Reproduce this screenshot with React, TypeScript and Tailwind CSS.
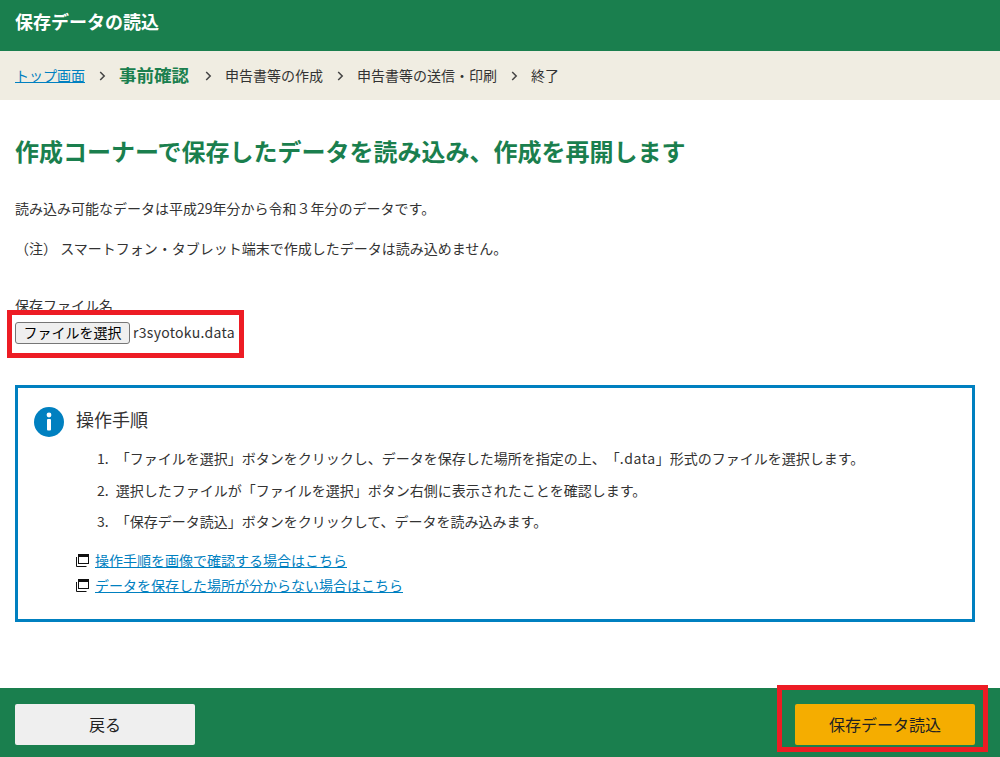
import { Fragment, type ReactNode } from "react"

const font = { fontFamily: '"Noto Sans CJK JP", sans-serif' }

const steps: ReactNode[] = [
  <>
    「ファイルを選択」ボタンをクリックし、データを保存した場所を指定の上、「<span className="tracking-[0.6px]">.data</span>」形式のファイルを選択します。
  </>,
  "選択したファイルが「ファイルを選択」ボタン右側に表示されたことを確認します。",
  "「保存データ読込」ボタンをクリックして、データを読み込みます。",
]

const links = ["操作手順を画像で確認する場合はこちら", "データを保存した場所が分からない場合はこちら"]

const crumbs = ["申告書等の作成", "申告書等の送信・印刷", "終了"]

function Chevron() {
  return (
    <svg width="7" height="10" viewBox="0 0 7 10" className="mx-[13.5px] shrink-0">
      <path d="M1.2 1 L5.2 5 L1.2 9" fill="none" stroke="#444" strokeWidth="1.5" />
    </svg>
  )
}

function WindowIcon() {
  return (
    <svg width="13" height="13" viewBox="0 0 13 13" className="shrink-0">
      <rect x="2.5" y="0.5" width="10" height="9" fill="#fff" stroke="#111" />
      <rect x="2.5" y="0.5" width="10" height="2.5" fill="#111" />
      <path d="M0.5 3 V12.5 H10.5" fill="none" stroke="#111" />
    </svg>
  )
}

export default function App() {
  return (
    <div style={font} className="relative flex h-[757px] w-[1000px] flex-col overflow-hidden bg-white text-[#333] [text-spacing-trim:space-all]">
      {/* Header */}
      <header className="flex h-[51px] items-center bg-[#1a7f4e] px-[15px] pb-[9px]">
        <h2 className="text-[18px] font-bold text-white">保存データの読込</h2>
      </header>

      {/* Steps */}
      <nav className="flex h-[49px] items-center bg-[#f0ede2] px-[15px] text-[14px]">
        <a className="text-[#0080c0] underline">トップ画面</a>
        <Chevron />
        <span className="mr-[2px] text-[17.5px] font-bold text-[#1a7f4e]">事前確認</span>
        <Chevron />
        {crumbs.map((c, i) => (
          <Fragment key={c}>
            {i > 0 && <Chevron />}
            <span>{c}</span>
          </Fragment>
        ))}
      </nav>

      <main className="flex-1 px-[15px]">
        <h1 className="mt-[33px] text-[24px] leading-[36px] font-bold text-[#1a7f4e]">
          作成コーナーで保存したデータを読み込み、作成を再開します
        </h1>
        <p className="mt-[28px] text-[14px] leading-[22px]">読み込み可能なデータは平成29年分から令和３年分のデータです。</p>
        <p className="mt-[18px] text-[14px] leading-[22px]">（注） スマートフォン・タブレット端末で作成したデータは読み込めません。</p>

        <p className="mt-[35px] text-[14px] leading-[22px]">保存ファイル名</p>
        <div className="mt-[6px] flex items-center text-[14px]">
          <button className="h-[22px] w-[115px] rounded-[3px] border border-[#767676] bg-[#efefef] pb-[2px] text-[14px] leading-none text-black">
            ファイルを選択
          </button>
          <span className="ml-[3px] pb-[1px] tracking-[0.3px]">r3syotoku.data</span>
        </div>

        {/* Operating steps */}
        <section className="mt-[41px] h-[237px] w-[960px] border-[3px] border-[#0080c0] pt-[18px] pl-[16px]">
          <div className="flex items-center gap-[12px]">
            <svg width="30" height="30" viewBox="0 0 30 30" className="shrink-0">
              <circle cx="15" cy="15" r="15" fill="#0080c0" />
              <circle cx="15" cy="8" r="2.4" fill="#fff" />
              <rect x="13" y="12" width="4" height="11.5" rx="1" fill="#fff" />
            </svg>
            <span className="pb-[4px] text-[18px]">操作手順</span>
          </div>
          <ol className="mt-[10px] ml-[63px] text-[14px] leading-[22px]">
            {steps.map((s, i) => (
              <li key={i} className="mb-[9.5px] flex gap-[7px]">
                <span>{i + 1}.</span>
                <span>{s}</span>
              </li>
            ))}
          </ol>
          <ul className="mt-[16px] ml-[42px] text-[14px]">
            {links.map((l) => (
              <li key={l} className="flex h-[25px] items-center gap-[6px]">
                <WindowIcon />
                <a className="text-[#0080c0] underline">{l}</a>
              </li>
            ))}
          </ul>
        </section>
      </main>

      {/* Footer */}
      <footer className="flex h-[69px] items-center justify-between bg-[#1a7f4e] px-[25px] pt-[4px] pl-[15px]">
        <button className="h-[41px] w-[180px] rounded-[2px] bg-[#efefef] pb-[2px] text-[16px] text-[#222]">戻る</button>
        <button className="h-[41px] w-[180px] rounded-[2px] bg-[#f5ad00] pb-[2px] text-[16px] text-[#222]">保存データ読込</button>
      </footer>

      {/* Annotation boxes */}
      <div className="absolute top-[310px] left-[7px] h-[48px] w-[237px] border-[5px] border-[#ed1c24]" />
      <div className="absolute top-[685px] left-[777px] h-[67px] w-[211px] border-[5px] border-[#ed1c24]" />
    </div>
  )
}
